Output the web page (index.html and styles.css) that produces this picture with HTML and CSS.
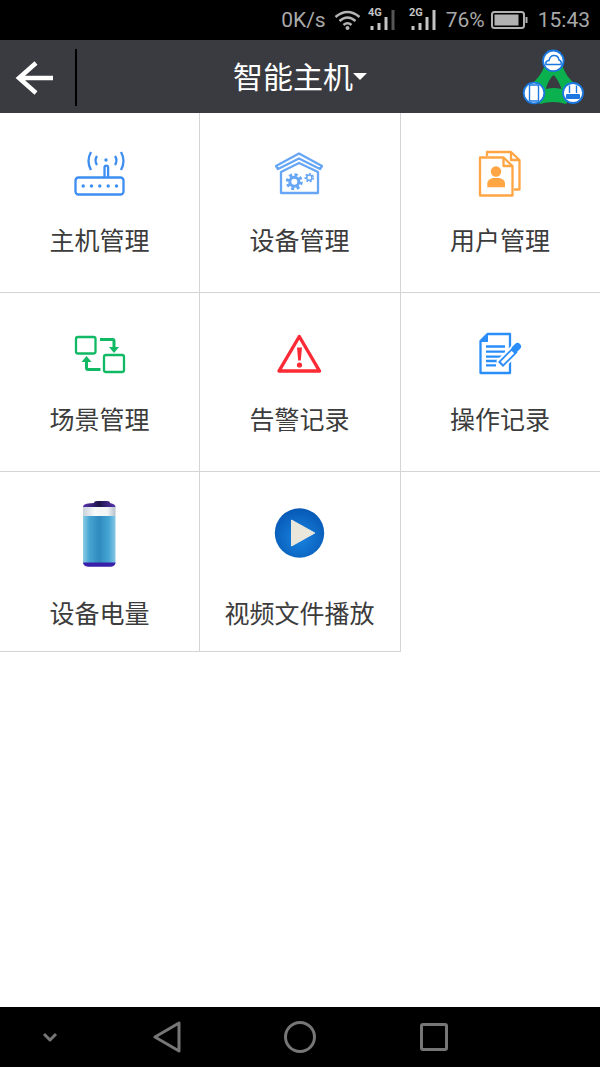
FILE: index.html
```html
<!DOCTYPE html>
<html lang="zh-CN">
<head>
    <meta charset="UTF-8">
    <meta name="viewport" content="width=device-width, initial-scale=1.0">
    <title>智能主机</title>
    <link rel="stylesheet" href="styles.css">
</head>
<body>
<!-- Status bar -->
<div class="status-bar">
    <span class="status-speed">0K/s</span>
    <svg class="status-wifi" width="27" height="20" viewBox="0 0 27 20">
        <path d="M1.5 7 Q13.5 -3 25.5 7" />
        <path d="M5.5 11 Q13.5 4 21.5 11" />
        <path d="M9.5 15 Q13.5 11.5 17.5 15" />
        <circle cx="13.5" cy="18" r="2" />
    </svg>
    <svg class="status-signal" width="29" height="24" viewBox="0 0 29 24">
        <text x="1" y="9">4G</text>
        <rect x="3.5" y="19" width="3" height="4" />
        <rect x="10.5" y="16" width="3" height="7" />
        <rect x="17.5" y="10" width="3" height="13" />
        <rect class="signal-off" x="24.5" y="3" width="3" height="20" />
    </svg>
    <svg class="status-signal status-signal-two" width="29" height="24" viewBox="0 0 29 24">
        <text x="1" y="9">2G</text>
        <rect x="3.5" y="19" width="3" height="4" />
        <rect x="10.5" y="16" width="3" height="7" />
        <rect x="17.5" y="10" width="3" height="13" />
        <rect x="24.5" y="3" width="3" height="20" />
    </svg>
    <span class="status-battery-text">76%</span>
    <svg class="status-battery" width="37" height="18" viewBox="0 0 37 18">
        <rect class="battery-shell" x="1" y="1" width="32" height="16" rx="2.5" />
        <rect x="3.5" y="3.5" width="24" height="11" />
        <rect x="34.5" y="6" width="2" height="6" />
    </svg>
    <span class="status-time">15:43</span>
</div>

<!-- Title bar -->
<header class="title-bar">
    <div class="title-left">
        <div class="back-btn">
            <svg width="40" height="36" viewBox="0 0 40 36">
                <path d="M3 18 H38 M21 3 L4 18 L21 33" />
            </svg>
        </div>
    </div>
    <div class="title-center">
        <h1>智能主机</h1>
        <span class="title-caret"></span>
    </div>
    <div class="title-right">
        <svg width="66" height="60" viewBox="0 0 66 60">
            <path class="logo-web" fill-rule="evenodd" d="M25 17 C22 25 17 32 10 37 L20 56 Q33 52 46 56 L57 37 C49 32 45 25 42 17 Z M33.5 27 C30 30 27 36 26 41 Q33.5 39 41.5 41 C40 36 37 30 33.5 27 Z" />
            <circle class="logo-node" cx="33.3" cy="12.8" r="10.3" />
            <circle class="logo-node" cx="14" cy="45" r="10.3" />
            <circle class="logo-node" cx="53" cy="45" r="10" />
            <path class="logo-cloud" d="M26 16.5 Q25 13 29 12.5 Q30 7.5 34 7.5 Q38.5 7.5 39 12 Q42 13 41 16.5 Z" />
            <rect class="logo-phone" x="9.5" y="37" width="9" height="16" rx="1.2" />
            <rect class="logo-router" x="46" y="46" width="14" height="5" rx="1" />
            <path class="logo-ant" d="M49.5 45 V37.5 M56.5 45 V37.5" />
        </svg>
    </div>
</header>

<!-- Menu grid -->
<main class="menu-grid">
    <a class="menu-cell">
        <div class="cell-icon">
            <svg width="60" height="60" viewBox="0 0 60 60">
                <g class="icon-line icon-router">
                    <rect x="5.5" y="33.5" width="48" height="17" rx="3" />
                    <path d="M34.5 33 V23.5 a1.8 1.8 0 0 1 3.6 0 V33" />
                    <path d="M27 12 Q24 16.5 27 21 M21 8 Q16 17 21 26 M45 12 Q48 16.5 45 21 M51 8 Q56 17 51 26" />
                </g>
                <g class="icon-fill-router">
                    <circle cx="36" cy="16" r="1.7" />
                    <circle cx="13.2" cy="42" r="1.7" />
                    <circle cx="21.5" cy="42" r="1.7" />
                    <circle cx="29.8" cy="42" r="1.7" />
                    <circle cx="38.2" cy="42" r="1.7" />
                    <circle cx="46.5" cy="42" r="1.7" />
                </g>
            </svg>
        </div>
        <span class="cell-label">主机管理</span>
    </a>
    <a class="menu-cell">
        <div class="cell-icon">
            <svg width="60" height="60" viewBox="0 0 60 60">
                <g class="icon-line icon-house">
                    <path d="M29 9.5 L52 22 L50 25 L29 14.5 L8 25 L6 22 Z" />
                    <path d="M11 28 L29 19 L48 28 V49 H11 Z" />
                    <circle class="gear-ring" cx="24.3" cy="37.7" r="4.5" />
                    <circle class="gear-teeth" cx="24.3" cy="37.7" r="7" />
                    <circle class="gear-ring-small" cx="39.3" cy="33.7" r="2.6" />
                    <circle class="gear-teeth-small" cx="39.3" cy="33.7" r="4" />
                </g>
            </svg>
        </div>
        <span class="cell-label">设备管理</span>
    </a>
    <a class="menu-cell">
        <div class="cell-icon">
            <svg width="60" height="60" viewBox="0 0 60 60">
                <g class="icon-line icon-users">
                    <path d="M17 12 V8 H41 L49.5 16 V45.5 H44" />
                    <path d="M41 8 V16 H49.5" />
                    <path class="doc-front" d="M10 13.5 H33.5 L42.5 22 V51.5 H10 Z" />
                    <path d="M33.5 13.5 V22 H42.5" />
                </g>
                <g class="icon-fill-users">
                    <circle cx="26" cy="27.5" r="5.2" />
                    <path d="M17.3 43.3 V39 Q18 35 23 34 H29 Q34.5 35 35 39 V43.3 Z" />
                </g>
            </svg>
        </div>
        <span class="cell-label">用户管理</span>
    </a>
    <a class="menu-cell">
        <div class="cell-icon">
            <svg width="60" height="60" viewBox="0 0 60 60">
                <g class="icon-line icon-scene">
                    <rect x="6" y="13" width="19.5" height="16.5" rx="2" />
                    <rect x="34" y="31" width="20" height="17" rx="2" />
                    <path class="scene-arrow" d="M30 15.5 H42.5 Q44 15.5 44 17 V24" />
                    <path class="scene-arrow" d="M30.5 45.5 H18 Q16.5 45.5 16.5 44 V37" />
                </g>
                <path class="icon-fill-scene" d="M39 23 H49 L44 29 Z M11.5 38 H21.5 L16.5 32 Z" />
            </svg>
        </div>
        <span class="cell-label">场景管理</span>
    </a>
    <a class="menu-cell">
        <div class="cell-icon">
            <svg width="60" height="60" viewBox="0 0 60 60">
                <path class="icon-line icon-warning" d="M29.3 12.5 L49.5 47 H9 Z" />
                <path class="warning-bar" d="M27 23.5 H32 L30.8 36.5 H28.2 Z" />
                <circle class="warning-dot" cx="29.5" cy="41" r="2.6" />
            </svg>
        </div>
        <span class="cell-label">告警记录</span>
    </a>
    <a class="menu-cell">
        <div class="cell-icon">
            <svg width="60" height="60" viewBox="0 0 60 60">
                <g class="icon-line icon-note">
                    <path d="M17.5 10 H40 V49 H10.5 V17 Z" />
                    <path d="M16 22.5 H35 M16 27.7 H35 M16 32.7 H33 M16 37 H30 M16 41.3 H26" />
                </g>
                <path class="note-fold" d="M10 18 L18 9.5 V18 Z" />
                <path class="note-pen-halo" d="M30 41 L46 25" />
                <path class="note-pen" d="M30.5 40.5 L45 26" />
                <path class="note-pen-core" d="M32 39 L43 28" />
                <path class="note-pen-tip" d="M45 25 L47.5 22.5" />
            </svg>
        </div>
        <span class="cell-label">操作记录</span>
    </a>
    <a class="menu-cell menu-cell-tall">
        <div class="cell-icon">
            <svg width="60" height="70" viewBox="0 0 60 70">
                <defs>
                    <linearGradient id="battery-body" x1="0" x2="1" y1="0" y2="0">
                        <stop offset="0" stop-color="#8ccde6" />
                        <stop offset="0.2" stop-color="#46a4d2" />
                        <stop offset="0.5" stop-color="#2f8abd" />
                        <stop offset="0.8" stop-color="#46a6d4" />
                        <stop offset="1" stop-color="#86c8e4" />
                    </linearGradient>
                    <linearGradient id="battery-top" x1="0" x2="1" y1="0" y2="0">
                        <stop offset="0" stop-color="#c8d2da" />
                        <stop offset="0.35" stop-color="#f6f8f9" />
                        <stop offset="0.75" stop-color="#f2f4f6" />
                        <stop offset="1" stop-color="#b4c2ca" />
                    </linearGradient>
                    <linearGradient id="battery-cap" x1="0" x2="1" y1="0" y2="0">
                        <stop offset="0" stop-color="#5a34b0" />
                        <stop offset="0.5" stop-color="#1c1248" />
                        <stop offset="1" stop-color="#5a34b0" />
                    </linearGradient>
                </defs>
                <rect fill="url(#battery-top)" x="13" y="6.5" width="32.5" height="10" />
                <rect fill="url(#battery-body)" x="13" y="16" width="32.5" height="47" />
                <path fill="url(#battery-cap)" d="M13 7 Q13 4 18 3.5 L24 3 Q24 1 27 1 H37 Q40 1 40 3 Q45.5 4 45.5 7 Z" />
                <path class="battery-base" d="M13 62.5 H45.5 Q45.5 66 41 66.7 H18 Q13 66 13 62.5 Z" />
            </svg>
        </div>
        <span class="cell-label">设备电量</span>
    </a>
    <a class="menu-cell menu-cell-tall">
        <div class="cell-icon">
            <svg width="60" height="70" viewBox="0 0 60 70">
                <defs>
                    <radialGradient id="play-disc" cx="0.5" cy="0.6" r="0.6">
                        <stop offset="0" stop-color="#1a84e2" />
                        <stop offset="1" stop-color="#0659b4" />
                    </radialGradient>
                </defs>
                <circle fill="url(#play-disc)" cx="29.5" cy="33" r="24.7" />
                <path class="play-arrow" d="M21.5 20 L44.8 33 L21.5 46 Z" />
            </svg>
        </div>
        <span class="cell-label">视频文件播放</span>
    </a>
</main>

<!-- Navigation bar -->
<footer class="nav-bar">
    <svg width="16" height="10" viewBox="0 0 16 10"><path d="M2 2 L8 8 L14 2" /></svg>
    <svg width="28" height="32" viewBox="0 0 28 32"><path d="M26 2 V30 L2 16 Z" /></svg>
    <svg width="34" height="34" viewBox="0 0 34 34"><circle cx="17" cy="17" r="14.5" /></svg>
    <svg width="28" height="28" viewBox="0 0 28 28"><rect x="1.5" y="1.5" width="25" height="25" rx="1.5" /></svg>
</footer>
</body>
</html>
```

FILE: styles.css
```css
* {
    box-sizing: border-box;
}

body {
    font-family: Roboto, "Noto Sans CJK SC", sans-serif;
    background-color: #fff;
    color: #333;
    margin: 0;
    padding: 0;
    height: 1067px;
    display: flex;
    flex-direction: column;
    overflow: hidden;
}

svg {
    display: block;
}

/* Status bar */
.status-bar {
    height: 40px;
    background-color: #000;
    color: #a9a9a9;
    font-size: 21px;
    display: flex;
    justify-content: flex-end;
    align-items: center;
    padding-right: 10px;
}

.status-wifi {
    margin-left: 8px;
}

.status-wifi path {
    fill: none;
    stroke: #b4b4b4;
    stroke-width: 2.6;
}

.status-wifi circle {
    fill: #b4b4b4;
}

.status-signal {
    margin-left: 6px;
    margin-top: -2px;
}

.status-signal-two {
    margin-left: 12px;
}

.status-signal text {
    font-family: Roboto, sans-serif;
    font-size: 11px;
    font-weight: 700;
    fill: #c4c4c4;
}

.status-signal rect {
    fill: #c4c4c4;
}

.status-signal .signal-off {
    fill: #555;
}

.status-battery-text {
    margin-left: 9px;
}

.status-battery {
    margin-left: 6px;
}

.status-battery rect {
    fill: #b0b0b0;
}

.status-battery .battery-shell {
    fill: none;
    stroke: #b0b0b0;
    stroke-width: 2;
}

.status-time {
    margin-left: 10px;
}

/* Title bar */
.title-bar {
    height: 73px;
    background-color: #3a3b40;
    display: grid;
    grid-template-columns: 80px 1fr 80px;
    align-items: center;
}

.title-left {
    display: flex;
}

.back-btn {
    width: 77px;
    height: 57px;
    border-right: 2px solid #000;
    display: flex;
    align-items: center;
    padding-left: 15px;
}

.back-btn path {
    fill: none;
    stroke: #fff;
    stroke-width: 4.5;
}

.title-center {
    display: flex;
    justify-content: center;
    align-items: center;
    color: #fff;
}

.title-center h1 {
    margin: 0;
    font-size: 30px;
    font-weight: 400;
    line-height: 75px;
}

.title-caret {
    width: 0;
    height: 0;
    border-left: 7px solid transparent;
    border-right: 7px solid transparent;
    border-top: 7px solid #fff;
    margin-top: -3px;
}

.logo-web {
    fill: #0bb14f;
}

.logo-node {
    fill: #fff;
    stroke: #1a78e0;
    stroke-width: 1.8;
}

.logo-cloud {
    fill: #fff;
    stroke: #1a78e0;
    stroke-width: 1.5;
}

.logo-phone {
    fill: #fff;
    stroke: #1a78e0;
    stroke-width: 1.4;
}

.logo-router {
    fill: #1a78e0;
}

.logo-ant {
    fill: none;
    stroke: #1a78e0;
    stroke-width: 1.4;
}

/* Menu grid */
.menu-grid {
    flex: 1;
    background-color: #fff;
    display: grid;
    grid-template-columns: 200px 201px 199px;
    grid-template-rows: 180px 179px 180px;
    align-content: start;
}

.menu-cell {
    display: flex;
    flex-direction: column;
    align-items: center;
    padding-top: 31px;
    border-right: 1px solid #d4d4d4;
    border-bottom: 1px solid #d4d4d4;
}

.menu-cell:not(:nth-child(3n+1)) {
    padding-right: 1px;
}

.menu-cell:nth-child(3n) {
    border-right: none;
}

.menu-cell:nth-child(-n+3) .cell-label {
    margin-top: 17px;
}

.menu-cell-tall {
    padding-top: 28px;
}

.cell-icon {
    height: 60px;
}

.menu-cell-tall .cell-icon {
    height: 70px;
}

.cell-label {
    font-family: "Noto Sans CJK SC", sans-serif;
    font-size: 25px;
    line-height: 36px;
    margin-top: 16px;
    color: #3c3c3c;
}

.menu-cell-tall .cell-label {
    margin-top: 24px;
}

/* Line icons */
.icon-line,
.icon-line path,
.icon-line rect {
    fill: none;
    stroke-width: 2.3;
    stroke-linejoin: round;
}

.icon-router {
    stroke: #3d8ef0;
}

.icon-fill-router {
    fill: #3d8ef0;
}

.icon-house {
    stroke: #66a6f5;
}

.gear-ring,
.gear-ring-small {
    fill: none;
    stroke-width: 3;
}

.gear-ring-small {
    stroke-width: 1.5;
}

.gear-teeth {
    fill: none;
    stroke-width: 3;
    stroke-dasharray: 3.1 2.4;
}

.gear-teeth-small {
    fill: none;
    stroke-width: 1.6;
    stroke-dasharray: 2 1.6;
}

.icon-users {
    stroke: #ffa544;
}

.icon-users .doc-front {
    fill: #fff;
}

.icon-fill-users {
    fill: #ffa544;
}

.icon-scene {
    stroke: #12b964;
}

.icon-scene .scene-arrow {
    stroke-width: 3;
}

.icon-fill-scene {
    fill: #12b964;
}

.icon-warning {
    fill: none;
    stroke: #fb2a35;
    stroke-width: 3.4;
    stroke-linejoin: round;
}

.warning-bar,
.warning-dot {
    fill: #fb2a35;
}

.icon-note {
    stroke: #2a8df8;
}

.note-fold {
    fill: #2a8df8;
}

.note-pen-halo {
    stroke: #fff;
    stroke-width: 11;
}

.note-pen {
    stroke: #2a8df8;
    stroke-width: 7;
}

.note-pen-core {
    stroke: #fff;
    stroke-width: 3.4;
}

.note-pen-tip {
    stroke: #2a8df8;
    stroke-width: 7;
    stroke-linecap: round;
}

.battery-base {
    fill: #3a20a8;
}

.play-arrow {
    fill: #e9e7db;
    stroke: #e9e7db;
    stroke-width: 1;
    stroke-linejoin: round;
}

/* Navigation bar */
.nav-bar {
    height: 60px;
    background-color: #000;
    display: grid;
    grid-template-columns: 100px 133px 134px 133px;
    justify-items: center;
    align-items: center;
}

.nav-bar path,
.nav-bar circle,
.nav-bar rect {
    fill: none;
    stroke: #767676;
    stroke-width: 3;
    stroke-linejoin: round;
}
```
